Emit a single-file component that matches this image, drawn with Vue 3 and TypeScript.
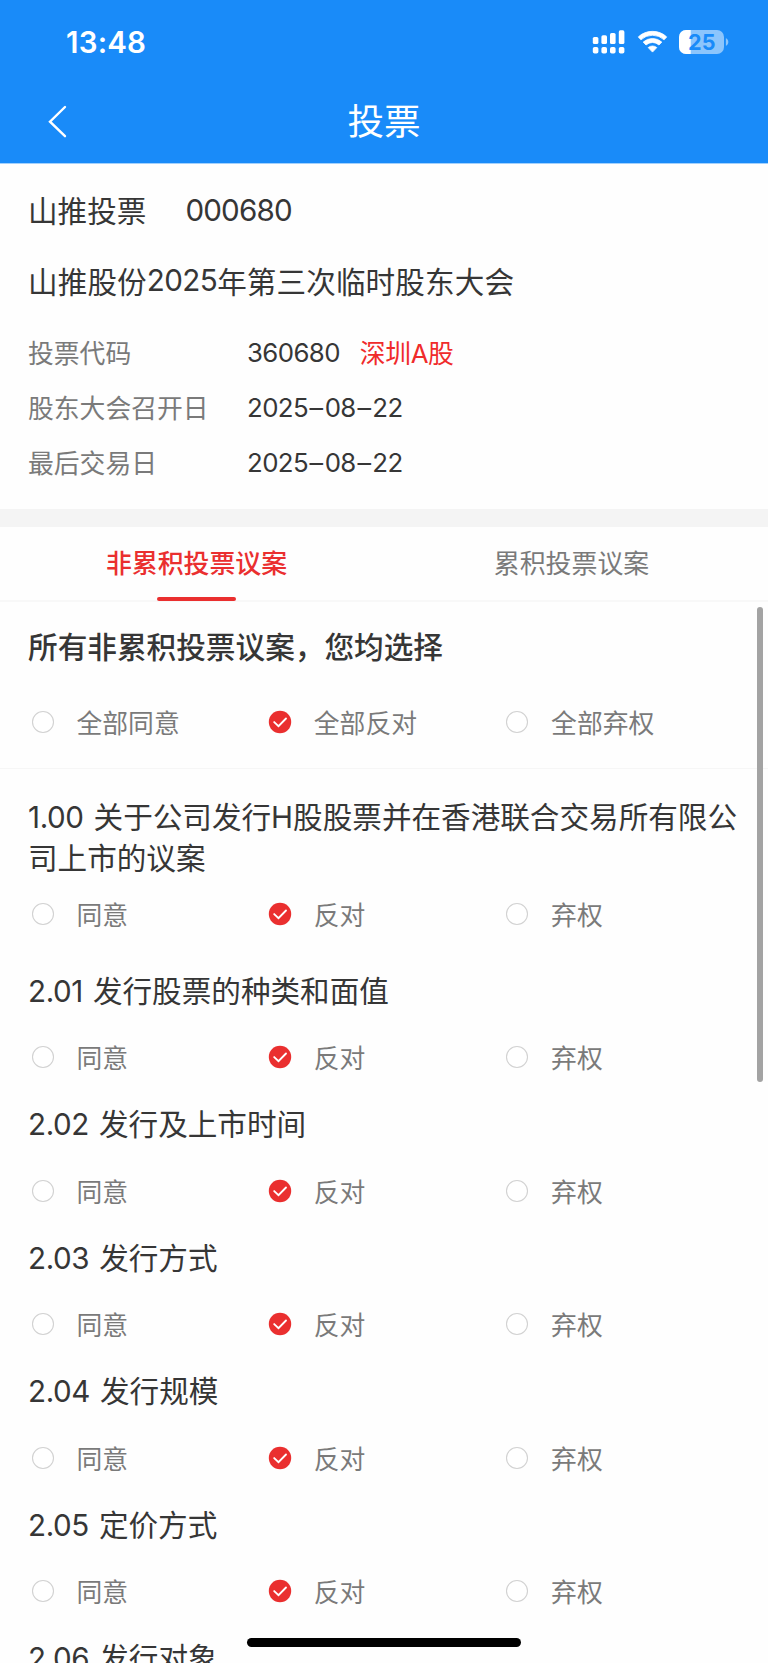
<script setup lang="ts">
import { ref } from 'vue'

type Choice = 0 | 1 | 2

interface Proposal {
  no: string
  title: string
  tall?: boolean
  choice: Choice
}

interface DateRow {
  label: string
  parts: string[]
}

const choices: string[] = ['同意', '反对', '弃权']
const allChoice = ref<Choice>(1)

const dates: DateRow[] = [
  { label: '股东大会召开日', parts: ['2025', '08', '22'] },
  { label: '最后交易日', parts: ['2025', '08', '22'] },
]

const proposals = ref<Proposal[]>([
  { no: '1.00', title: '关于公司发行H股股票并在香港联合交易所有限公司上市的议案', tall: true, choice: 1 },
  { no: '2.01', title: '发行股票的种类和面值', choice: 1 },
  { no: '2.02', title: '发行及上市时间', choice: 1 },
  { no: '2.03', title: '发行方式', choice: 1 },
  { no: '2.04', title: '发行规模', choice: 1 },
  { no: '2.05', title: '定价方式', choice: 1 },
  { no: '2.06', title: '发行对象', choice: 1 },
])

function chooseAll(index: number) {
  allChoice.value = index as Choice
  proposals.value.forEach((p) => (p.choice = index as Choice))
}
</script>

<template>
  <div class="screen">
    <header class="top">
      <div class="status">
        <span class="time">13:48</span>
        <svg class="status-icons" width="138" height="28" viewBox="0 0 138 28">
          <g fill="#fff">
            <rect x="1.8" y="9" width="5.6" height="7" rx="1.6" />
            <rect x="10.4" y="7.3" width="5.6" height="8.7" rx="1.6" />
            <rect x="19" y="5" width="5.6" height="11" rx="1.6" />
            <rect x="27.8" y="2.3" width="5.6" height="13.7" rx="1.6" />
            <rect x="1.8" y="19" width="5.6" height="6.5" rx="1.8" />
            <rect x="10.4" y="19" width="5.6" height="6.5" rx="1.8" />
            <rect x="19" y="19" width="5.6" height="6.5" rx="1.8" />
            <rect x="27.8" y="19" width="5.6" height="6.5" rx="1.8" />
            <path d="M47.3 8.9a21 21 0 0 1 28.4 0l-2.6 2.9a17 17 0 0 0-23.2 0z" stroke="#fff" stroke-width=".8" stroke-linejoin="round" />
            <path d="M52.2 14.1a13.8 13.8 0 0 1 18.6 0l-2.8 2.9a9.6 9.6 0 0 0-13 0z" stroke="#fff" stroke-width=".8" stroke-linejoin="round" />
            <path d="M57.2 19.6a6.6 6.6 0 0 1 8.6 0l-4.3 4.5z" stroke="#fff" stroke-width=".8" stroke-linejoin="round" />
          </g>
          <clipPath id="charge"><rect x="88" y="2" width="11.7" height="24" /></clipPath>
          <rect x="88" y="2" width="45" height="24" rx="7" fill="#8cc5fc" />
          <rect x="88" y="2" width="45" height="24" rx="7" fill="#fff" clip-path="url(#charge)" />
          <path d="M134.9 10.2c3.2 1.2 3.2 6.4 0 7.6z" fill="#8cc5fc" />
          <text class="charge" x="110.8" y="21.7" text-anchor="middle">25</text>
        </svg>
      </div>
      <div class="nav">
        <svg class="back" width="22" height="34" viewBox="0 0 22 34">
          <path d="M18 2 3 16.7l15 14.5" fill="none" stroke="#fff" stroke-width="2.4" stroke-linecap="round" stroke-linejoin="miter" />
        </svg>
        <h1>投票</h1>
      </div>
    </header>

    <section class="info">
      <div class="name"><span>山推投票</span><span class="num">000680</span></div>
      <div class="meeting">山推股份<span class="num">2025</span>年第三次临时股东大会</div>
      <div class="row">
        <span class="key">投票代码</span><span class="num">360680</span><span class="market">深圳A股</span>
      </div>
      <div v-for="d in dates" :key="d.label" class="row">
        <span class="key">{{ d.label }}</span>
        <span class="num"><template v-for="(part, i) in d.parts" :key="i"><span v-if="i" class="dash">–</span>{{ part }}</template></span>
      </div>
    </section>

    <nav class="tabs">
      <div class="tab active"><span>非累积投票议案</span></div>
      <div class="tab"><span>累积投票议案</span></div>
    </nav>

    <main class="body">
      <section class="all">
        <h2>所有非累积投票议案，您均选择</h2>
        <div class="options">
          <div v-for="(c, i) in choices" :key="c" class="option" @click="chooseAll(i)">
            <svg class="radio" viewBox="0 0 24 24">
              <template v-if="allChoice === i">
                <circle cx="12" cy="12" r="11.2" fill="#ea2f2f" />
                <path d="M6.2 12.1l4.3 4 7.5-7.6" fill="none" stroke="#fff" stroke-width="1.9" stroke-linecap="round" />
              </template>
              <circle v-else cx="12" cy="12" r="10.5" fill="#fff" stroke="#d2d2d2" stroke-width="1.1" />
            </svg>
            <span class="label">全部{{ c }}</span>
          </div>
        </div>
      </section>

      <section v-for="p in proposals" :key="p.no" class="item" :class="{ tall: p.tall }">
        <div class="title"><p><span class="no">{{ p.no }}</span>{{ p.title }}</p></div>
        <div class="options">
          <div v-for="(c, i) in choices" :key="c" class="option" @click="p.choice = i as Choice">
            <svg class="radio" viewBox="0 0 24 24">
              <template v-if="p.choice === i">
                <circle cx="12" cy="12" r="11.2" fill="#ea2f2f" />
                <path d="M6.2 12.1l4.3 4 7.5-7.6" fill="none" stroke="#fff" stroke-width="1.9" stroke-linecap="round" />
              </template>
              <circle v-else cx="12" cy="12" r="10.5" fill="#fff" stroke="#d2d2d2" stroke-width="1.1" />
            </svg>
            <span class="label">{{ c }}</span>
          </div>
        </div>
      </section>
      <div class="scrollbar"></div>
    </main>
    <div class="home"></div>
  </div>
</template>

<style>
body {
  margin: 0;
  background: #fff;
}
</style>

<style scoped>
.screen {
  position: relative;
  display: flex;
  flex-direction: column;
  width: 768px;
  height: 1663px;
  overflow: hidden;
  background: #fefefe;
  color: #363636;
  font-family: Inter, 'Noto Sans CJK SC', sans-serif;
  font-size: 29.6px;
}
.screen * {
  box-sizing: border-box;
}
h1,
h2,
p {
  margin: 0;
  font-weight: 400;
}
.top {
  flex: none;
  height: 164px;
  background: #198bf9;
  color: #fff;
  border-bottom: 1px solid #a3d1fd;
}
.status {
  display: flex;
  justify-content: space-between;
  align-items: center;
  height: 84px;
  padding: 0 39px 0 66px;
}
.time {
  font-size: 29.5px;
  font-weight: 600;
  letter-spacing: 0.2px;
}
.status-icons {
  display: block;
}
.charge {
  font-family: Inter, sans-serif;
  font-size: 21.6px;
  font-weight: 700;
  fill: #198bf9;
}
.nav {
  display: flex;
  align-items: center;
  height: 75px;
  padding: 0 47px;
}
.back {
  display: block;
}
h1 {
  flex: 1;
  margin-right: 22px;
  text-align: center;
  font-size: 36.6px;
  line-height: 44px;
}
.info {
  flex: none;
  height: 345px;
  padding-top: 17px;
}
.name,
.meeting,
.row {
  display: flex;
  align-items: center;
  padding-left: 28px;
  white-space: nowrap;
}
.name {
  height: 57px;
}
.name > span:first-child {
  padding-bottom: 1px;
}
.name .num {
  margin-left: 39px;
  letter-spacing: -0.8px;
}
.meeting {
  height: 85.5px;
  padding-bottom: 1px;
  letter-spacing: 0.1px;
}
.num {
  letter-spacing: -0.6px;
}
.dash {
  display: inline-block;
  width: 16.6px;
  text-align: center;
  letter-spacing: 0;
  transform: scaleX(1.05);
}
.row {
  height: 55.2px;
  font-size: 25.8px;
}
.row .num {
  position: relative;
  top: 1px;
}
.key {
  width: 219px;
  color: #7a7a7a;
}
.market {
  margin-left: 20px;
  letter-spacing: -0.4px;
  color: #f02b2b;
}
.tabs {
  flex: none;
  display: flex;
  height: 93px;
  padding: 0 9px;
  border-top: 18px solid #f4f4f4;
  border-bottom: 2px solid #f8f8f8;
}
.tab {
  position: relative;
  flex: 1;
  text-align: center;
  font-size: 25.9px;
  line-height: 74px;
  color: #7a7a7a;
}
.tab.active {
  color: #ea2f2f;
  font-weight: 500;
}
.tab.active::after {
  content: '';
  position: absolute;
  left: 50%;
  bottom: -1px;
  width: 79px;
  height: 4px;
  margin-left: -39.5px;
  border-radius: 2px;
  background: #ea2f2f;
}
.body {
  position: relative;
  flex: 1;
  min-height: 0;
  overflow: hidden;
}
.all {
  height: 167px;
  padding-top: 12px;
  border-bottom: 1px solid #f6f6f6;
}
h2 {
  height: 74.5px;
  padding-left: 28px;
  font-size: 29.65px;
  line-height: 67px;
  font-weight: 500;
}
.options {
  display: grid;
  grid-template-columns: repeat(3, 237.3px);
  height: 66px;
  padding-left: 30.8px;
}
.option {
  display: flex;
  align-items: center;
  gap: 21.7px;
  font-size: 25.8px;
  color: #7a7a7a;
}
.label {
  padding-bottom: 1px;
}
.radio {
  width: 24px;
  height: 24px;
}
.title {
  height: 66px;
  display: flex;
  align-items: center;
  padding: 0 26px 0 28px;
  line-height: 41.5px;
}
.no {
  margin-right: 10px;
  letter-spacing: -0.4px;
}
.item .options {
  margin-bottom: 1.5px;
}
.item.tall .title {
  height: 112.3px;
  padding-top: 27.6px;
  align-items: flex-start;
}
.item.tall .options {
  margin-bottom: 11px;
}
.scrollbar {
  position: absolute;
  top: 5px;
  right: 5.5px;
  width: 5.5px;
  height: 475px;
  border-radius: 3px;
  background: #a3a3a3;
}
.home {
  position: absolute;
  left: 247px;
  bottom: 16px;
  width: 274px;
  height: 9.5px;
  border-radius: 5px;
  background: #000;
}
</style>
